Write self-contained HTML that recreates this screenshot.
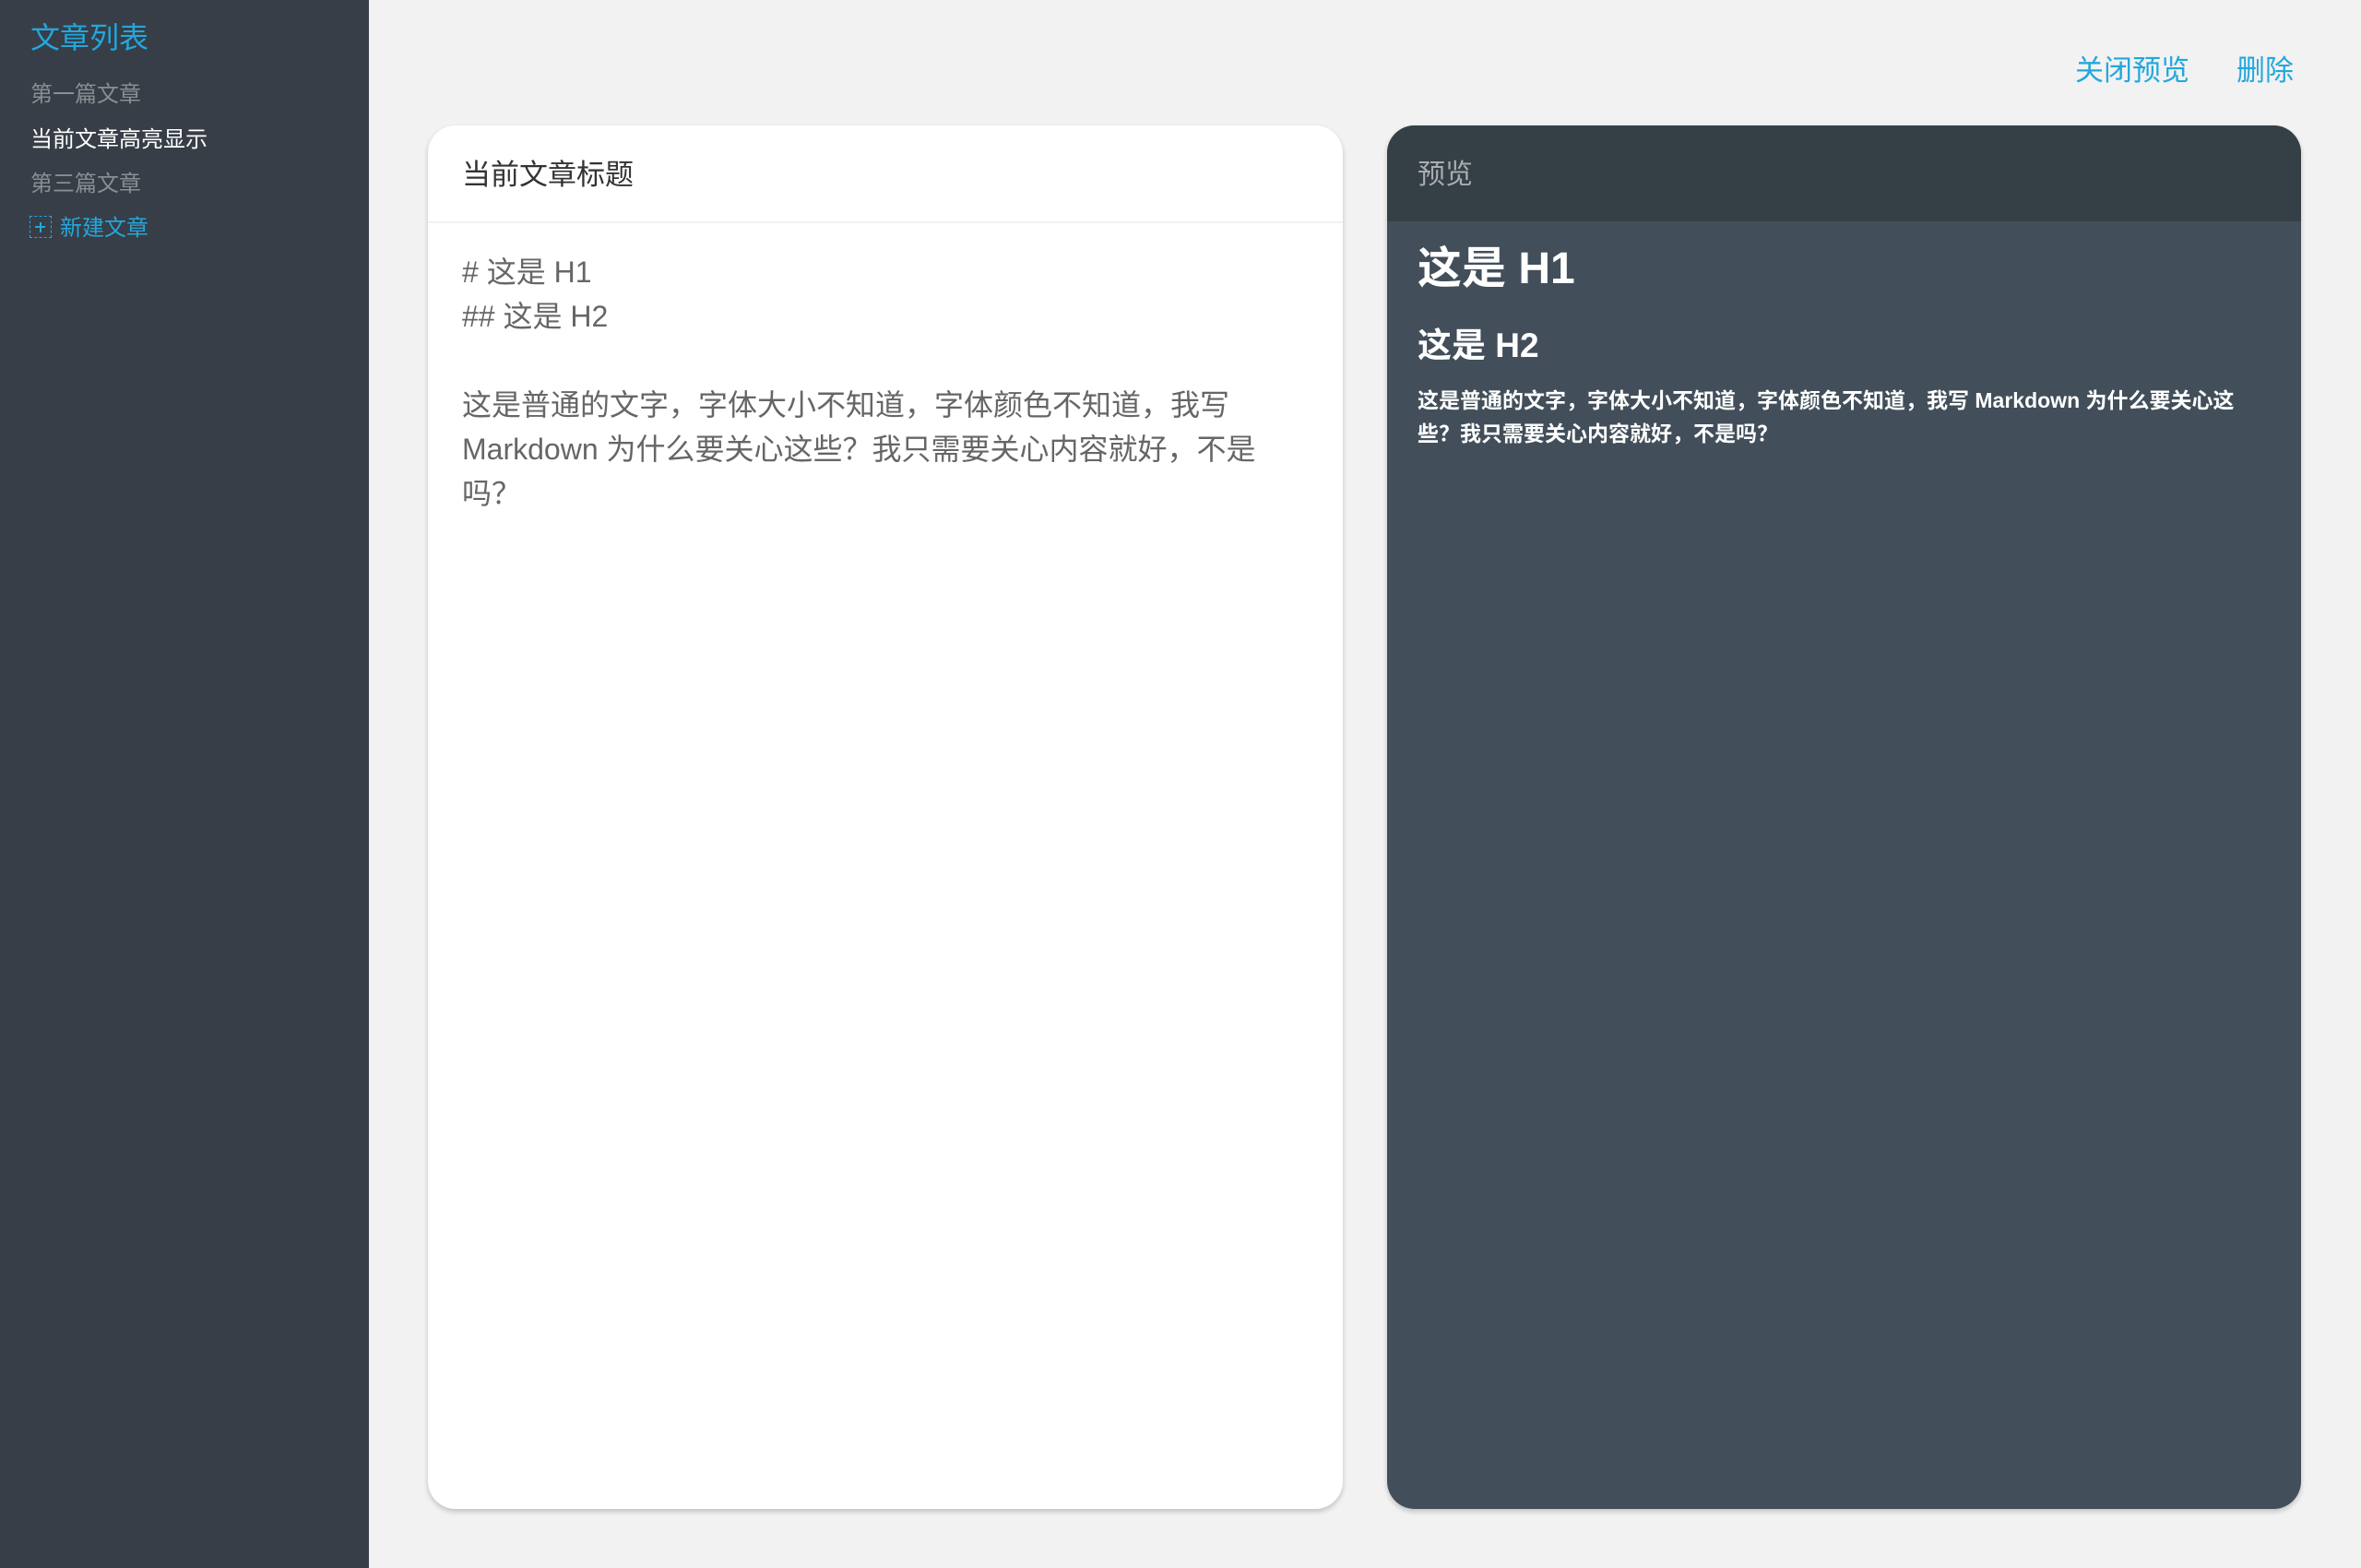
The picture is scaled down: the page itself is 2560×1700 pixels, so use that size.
<!DOCTYPE html>
<html><head><meta charset="utf-8"><style>
*{margin:0;padding:0;box-sizing:border-box}
body{width:2560px;height:1700px;background:#f2f2f2;font-family:"Liberation Sans","Noto Sans CJK SC",sans-serif;position:relative;overflow:hidden}
.side{position:absolute;left:0;top:0;width:400px;height:1700px;background:#373e47}
.side .t{position:absolute;left:33px;top:18px;font-size:32px;color:#23a7dc;line-height:46px}
.side .i{position:absolute;left:33px;font-size:24px;line-height:30px;color:#8a8e93}
.side .i.on{color:#fff}
.side .n{color:#23a7dc}
.box{display:inline-block;width:24px;height:24px;border:1.5px dashed #23a7dc;vertical-align:-3px;margin-right:8px;position:relative;left:-1px}
.box:before{content:"";position:absolute;left:5px;top:10px;width:11px;height:2px;background:#23a7dc}
.box:after{content:"";position:absolute;left:9.5px;top:5.5px;width:2px;height:11px;background:#23a7dc}
.links{position:absolute;top:57px;font-size:31px;color:#23a7dc;line-height:40px}
.card{position:absolute;top:136px;height:1500px;border-radius:30px;overflow:hidden;box-shadow:0 3px 6px rgba(0,0,0,.2)}
.l{left:464px;width:992px;background:#fff}
.l .h{height:106px;border-bottom:2px solid #f2f2f2;padding:34px 0 0 37px;font-size:31px;color:#333;line-height:40px}
.l .b{padding:29px 80px 0 37px;font-size:32px;line-height:48px;color:#666}
.r{left:1504px;width:991px;background:#424f5a;color:#fff}
.r .h{height:104px;background:#353f46;padding:34px 0 0 33px;font-size:30px;color:#a9adb0;line-height:40px}
.r h1{font-size:48px;line-height:60px;position:absolute;top:126px;left:33px;font-weight:600}
.r h2{font-size:37px;position:absolute;top:214px;left:33px;line-height:50px;font-weight:600}
.r p{position:absolute;top:280px;left:33px;right:30px;font-size:23px;line-height:36px;font-weight:600}
</style></head><body>
<div class="side">
<div class="t">文章列表</div>
<div class="i" style="top:88px">第一篇文章</div>
<div class="i on" style="top:137px">当前文章高亮显示</div>
<div class="i" style="top:185px">第三篇文章</div>
<div class="i n" style="top:233px"><span class="box"></span>新建文章</div>
</div>
<div class="links" style="left:2250px">关闭预览</div>
<div class="links" style="left:2425px">删除</div>
<div class="card l">
<div class="h">当前文章标题</div>
<div class="b"># 这是 H1<br>## 这是 H2<br><br>这是普通的文字，字体大小不知道，字体颜色不知道，我写 Markdown 为什么要关心这些？我只需要关心内容就好，不是吗？</div>
</div>
<div class="card r">
<div class="h">预览</div>
<h1>这是 H1</h1>
<h2>这是 H2</h2>
<p>这是普通的文字，字体大小不知道，字体颜色不知道，我写 Markdown 为什么要关心这些？我只需要关心内容就好，不是吗？</p>
</div>
</body></html>
